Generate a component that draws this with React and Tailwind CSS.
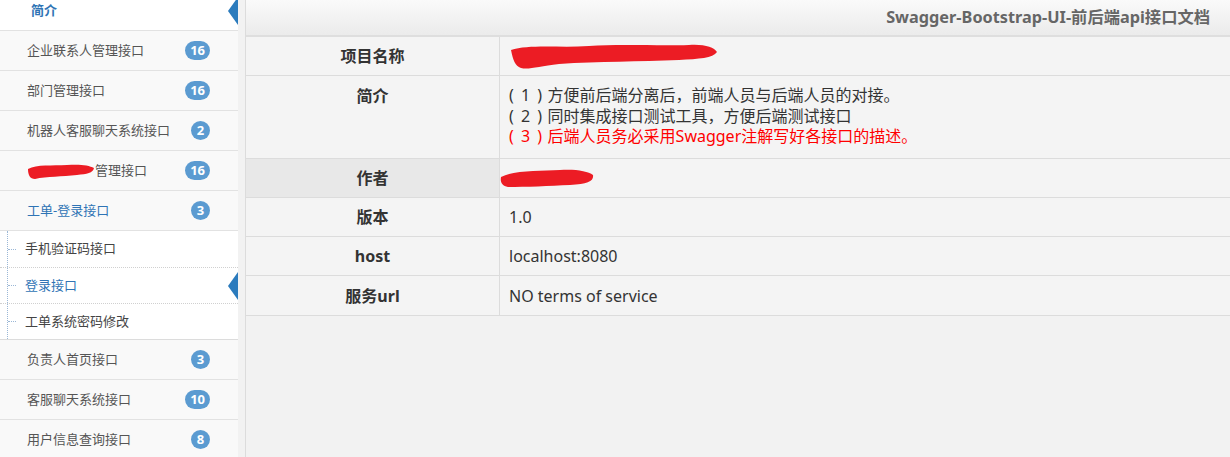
import React from "react";

const FONT = { fontFamily: '"Noto Sans", "Noto Sans CJK SC", sans-serif' };

function Badge({ n }) {
  return (
    <span className="inline-flex h-[19px] min-w-[19px] items-center justify-center rounded-full bg-[#5b9bd1] px-[5px] text-[13px] font-bold leading-none text-white">
      {n}
    </span>
  );
}

function Triangle() {
  return (
    <svg className="absolute right-0 top-1/2 -translate-y-1/2" width="10" height="28" viewBox="0 0 10 28">
      <polygon points="10,0 0,14 10,28" fill="#2b7bbd" />
    </svg>
  );
}

function Row({ label, badge, blue }) {
  return (
    <div className="flex h-[40px] items-center justify-between border-b border-[#e2e2e2] bg-[#f9f9f9] pl-[27px] pr-[28px]">
      <span className={`flex items-center text-[13px] ${blue ? "text-[#2f74b5]" : "text-[#555]"}`}>{label}</span>
      <Badge n={badge} />
    </div>
  );
}

function SubItem({ label, h, active, last }) {
  return (
    <div
      className={`relative flex items-center bg-white ${last ? "border-b border-solid border-[#dcdcdc]" : "border-b border-dotted border-[#d0d0d0]"}`}
      style={{ height: h }}
    >
      <div className="ml-[7px] flex h-full w-[10px] items-center border-l border-dotted border-[#9ab7d6]">
        <span className="block w-[8px] border-t border-dotted border-[#9ab7d6]" />
      </div>
      <span className={`ml-[8px] text-[13px] ${active ? "text-[#2f74b5]" : "text-[#444]"}`}>{label}</span>
      {active && <Triangle />}
    </div>
  );
}

function TRow({ label, children, h, dark, top }) {
  return (
    <div className="flex border-b border-[#dcdcdc]" style={{ minHeight: h }}>
      <div
        className={`flex w-[254px] shrink-0 justify-center border-r border-[#dcdcdc] text-[16px] font-bold text-[#333] ${dark ? "bg-[#e8e8e8]" : "bg-[#f4f4f4]"} ${top ? "items-start pt-[8px]" : "items-center"}`}
      >
        {label}
      </div>
      <div className={`flex flex-1 bg-[#f4f4f4] pl-[9px] text-[16px] text-[#333] ${top ? "items-start pt-[9px]" : "items-center"}`}>
        {children}
      </div>
    </div>
  );
}

function Num({ n }) {
  return <span className="mr-[4px] whitespace-pre tracking-[1.5px]">( {n} )</span>;
}

export default function App() {
  return (
    <div className="flex h-[457px] w-[1230px] overflow-hidden bg-[#f2f2f2]" style={FONT}>
      <aside className="w-[238px] shrink-0 bg-[#f9f9f9]">
        <div className="relative flex h-[31px] items-center border-b border-[#e2e2e2] bg-white pl-[31px]">
          <span className="-mt-[8px] text-[13px] font-bold text-[#2f74b5]">简介</span>
          <svg className="absolute right-0 -top-[3px]" width="10" height="28" viewBox="0 0 10 28">
            <polygon points="10,0 0,14 10,28" fill="#2b7bbd" />
          </svg>
        </div>
        <Row label="企业联系人管理接口" badge="16" />
        <Row label="部门管理接口" badge="16" />
        <Row label="机器人客服聊天系统接口" badge="2" />
        <div className="flex h-[40px] items-center justify-between border-b border-[#e2e2e2] bg-[#f9f9f9] pl-[27px] pr-[28px]">
          <span className="flex items-center text-[13px] text-[#555]">
            <svg width="68" height="22" viewBox="0 0 68 22">
              <path d="M1 9 C10 4 25 6 40 5 C52 4 62 5 67 8 C66 13 60 14 50 15 C35 17 20 16 8 19 C3 19 1 15 1 9 Z" fill="#ec1c24" />
            </svg>
            管理接口
          </span>
          <Badge n="16" />
        </div>
        <Row label="工单-登录接口" badge="3" blue />
        <SubItem label="手机验证码接口" h={37} />
        <SubItem label="登录接口" h={36} active />
        <SubItem label="工单系统密码修改" h={36} last />
        <Row label="负责人首页接口" badge="3" />
        <Row label="客服聊天系统接口" badge="10" />
        <Row label="用户信息查询接口" badge="8" />
      </aside>
      <main className="ml-[7px] flex flex-1 flex-col border-l border-[#dcdcdc]">
        <header className="flex h-[37px] shrink-0 items-center justify-end border-b-2 border-[#dedede] bg-linear-to-b from-[#fafafa] to-[#ebebeb] pr-[20px]">
          <span className="text-[16.3px] font-bold text-[#666]">Swagger-Bootstrap-UI-前后端api接口文档</span>
        </header>
        <div>
          <TRow label="项目名称" h={39}>
            <svg width="210" height="32" viewBox="0 0 210 32">
              <path
                d="M2 10 C20 4 50 8 80 6 C110 4 150 6 180 5 C195 4 205 7 208 12 C204 18 190 19 170 20 C130 22 90 21 50 24 C30 26 20 30 12 28 C6 26 4 20 2 10 Z"
                fill="#ec1c24"
              />
            </svg>
          </TRow>
          <TRow label="简介" h={83} top>
            <div className="leading-[20.5px]">
              <div><Num n="1" />方便前后端分离后，前端人员与后端人员的对接。</div>
              <div><Num n="2" />同时集成接口测试工具，方便后端测试接口</div>
              <div className="text-[#ff0000]"><Num n="3" />后端人员务必采用Swagger注解写好各接口的描述。</div>
            </div>
          </TRow>
          <TRow label="作者" h={39} dark>
            <svg className="-ml-[9px]" width="94" height="22" viewBox="0 0 94 22">
              <path d="M1 10 C15 3 40 4 60 3 C75 2 88 4 93 8 C94 14 88 17 70 18 C50 19 25 20 8 20 C2 19 0 15 1 10 Z" fill="#ec1c24" />
            </svg>
          </TRow>
          <TRow label="版本" h={39}>1.0</TRow>
          <TRow label="host" h={39}>localhost:8080</TRow>
          <TRow label="服务url" h={40}>NO terms of service</TRow>
        </div>
      </main>
    </div>
  );
}
